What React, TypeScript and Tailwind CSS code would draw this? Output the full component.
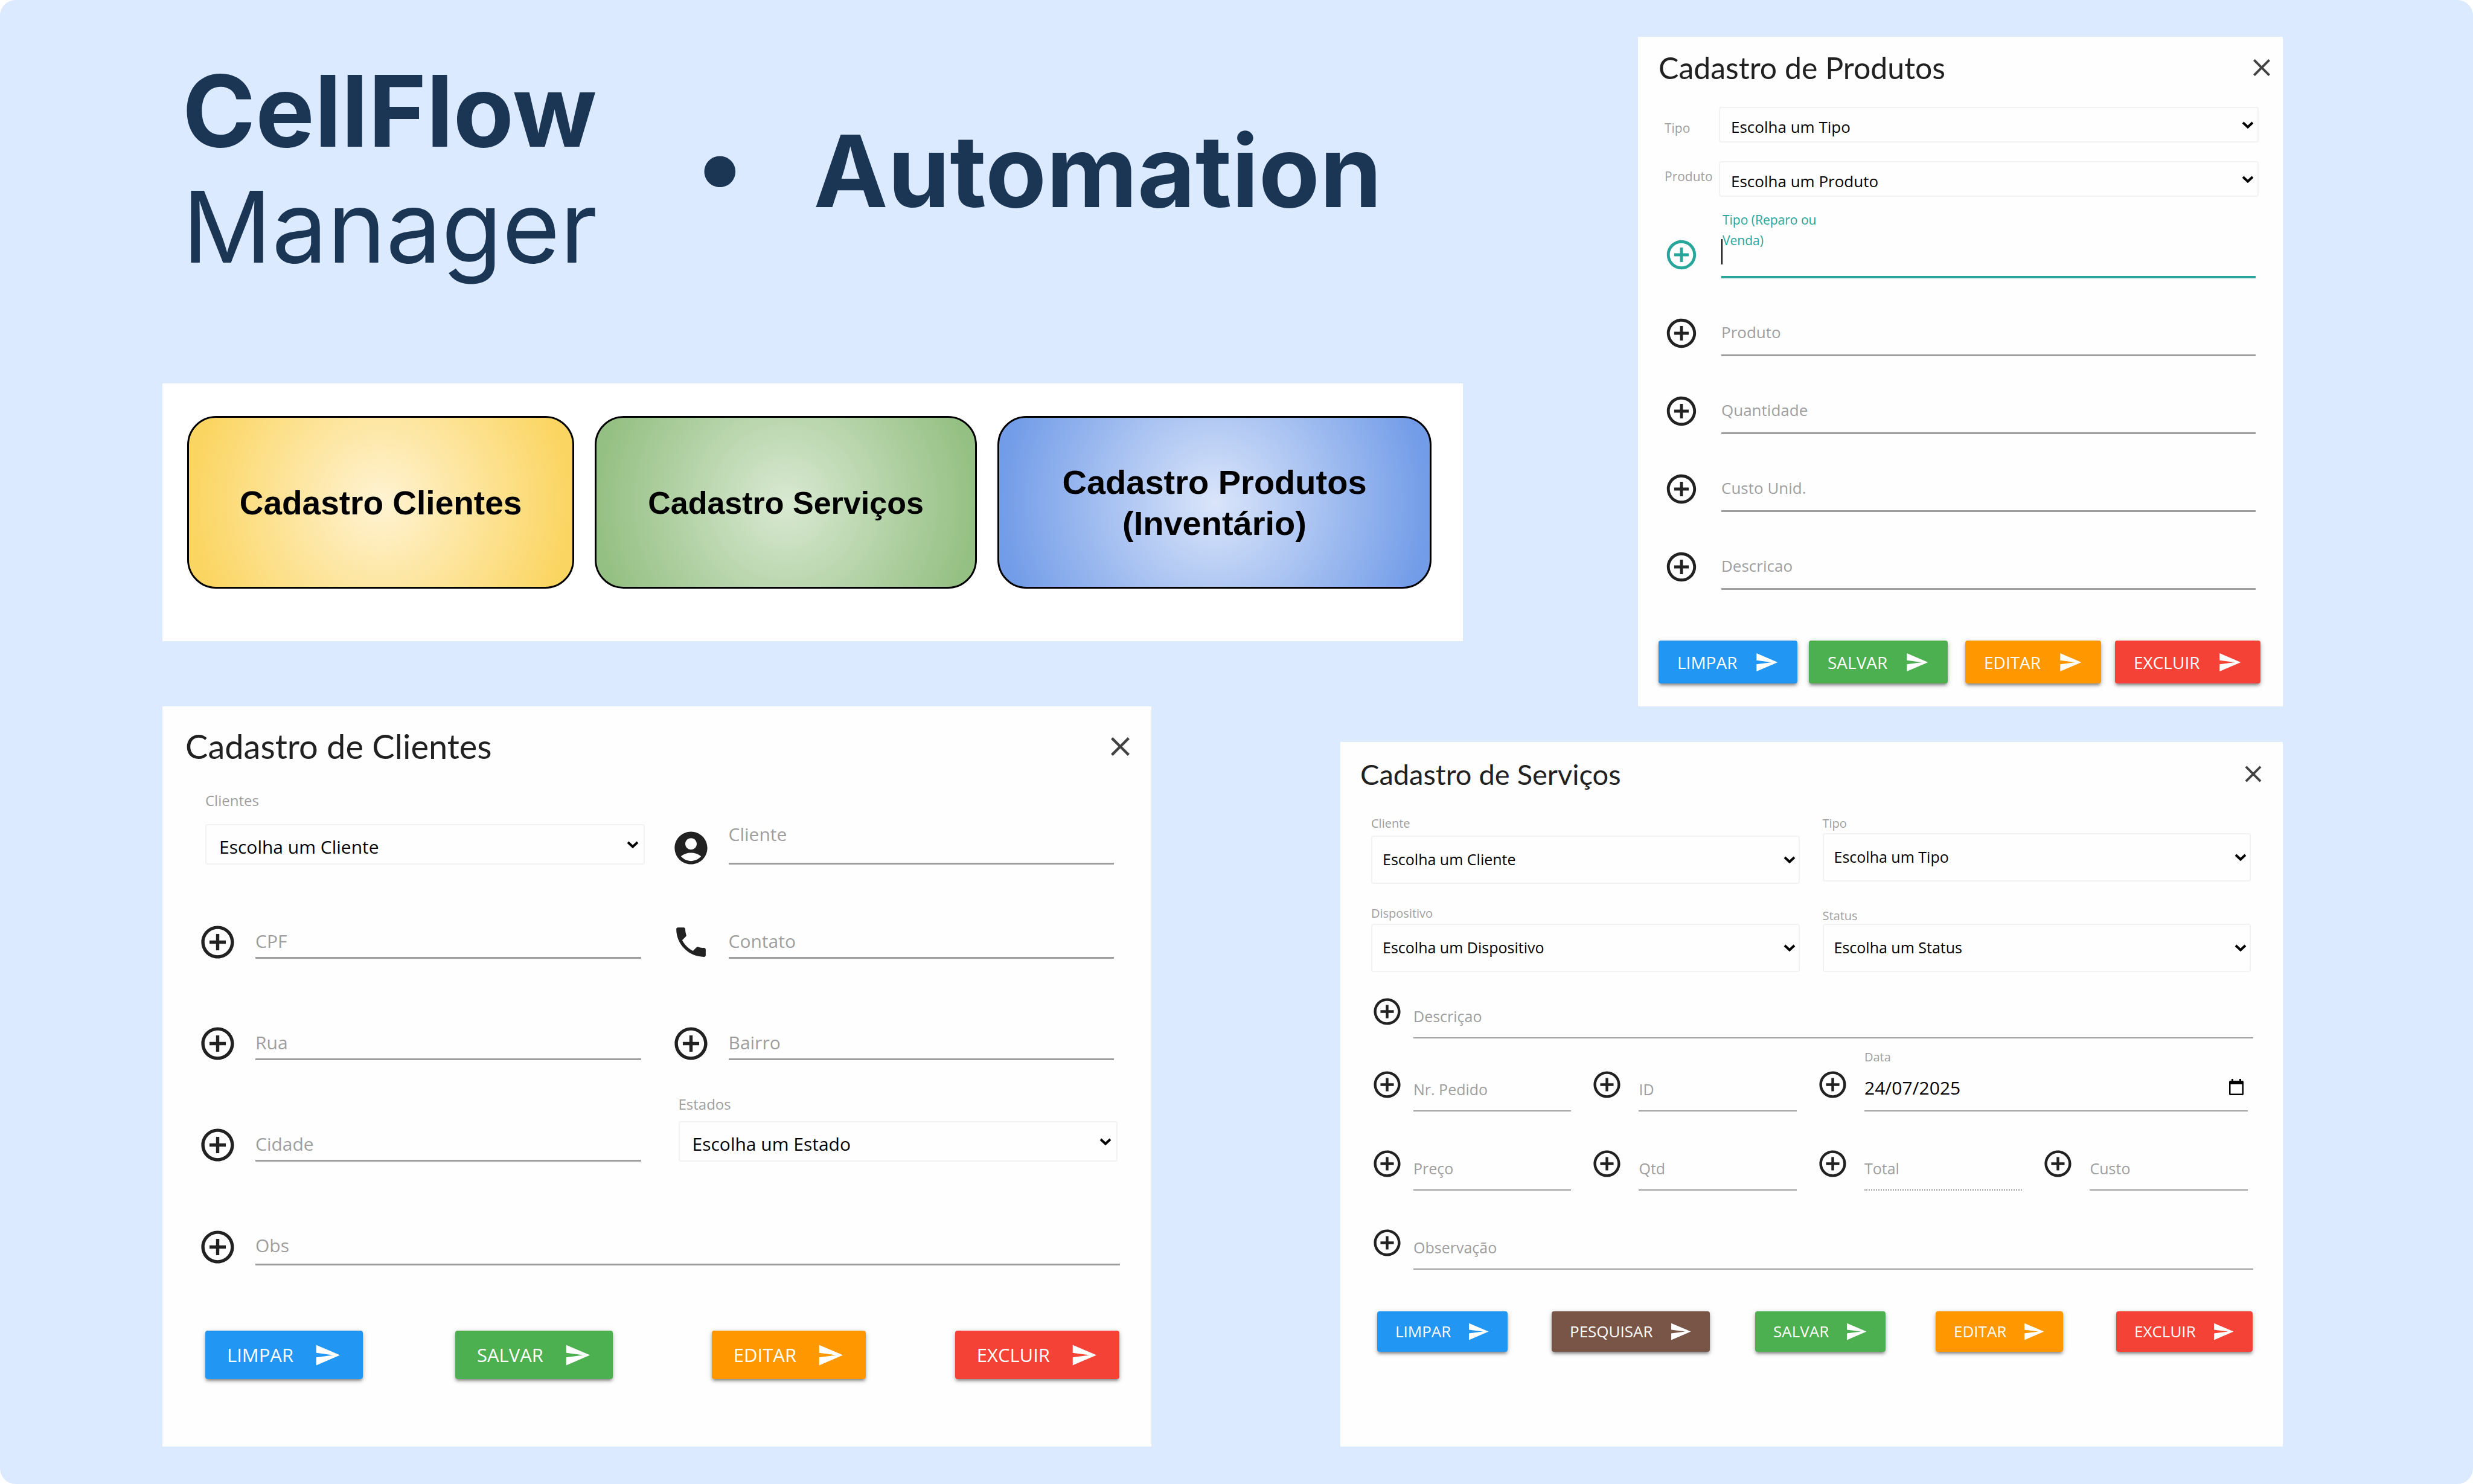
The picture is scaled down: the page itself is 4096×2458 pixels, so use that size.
import { useId } from "react";
import type { ReactNode } from "react";
import type { IconType } from "react-icons";
import { MdAccountCircle, MdAddCircleOutline, MdClose, MdPhone, MdSend } from "react-icons/md";
import clsx from "clsx";

type Size = "sm" | "md" | "lg";

const labelText: Record<Size, string> = {
  sm: "text-[20px] leading-[24px]",
  md: "text-[21px] leading-[34px]",
  lg: "text-[24px] leading-[34px]",
};

const fieldText: Record<Size, string> = {
  sm: "border-b-2 text-[25px] leading-[40px]",
  md: "border-b-3 text-[26px] leading-[40px]",
  lg: "border-b-3 text-[30px] leading-[48px]",
};

const iconSize: Record<Size, string> = {
  sm: "size-[53px]",
  md: "size-[58px]",
  lg: "size-[65px]",
};

const selectBox: Record<Size, string> = {
  sm: "h-[80px] pl-[17px] text-[25px]",
  md: "h-[59px] pl-[18px] pt-[7px] text-[26px]",
  lg: "h-[67px] pl-[21px] pt-[7px] text-[30px]",
};

const chevronBox: Record<Size, string> = {
  sm: "right-[7px]",
  md: "right-[8px]",
  lg: "right-[10px]",
};

const buttonBox: Record<Size, string> = {
  sm: "h-[67px] px-[30px] gap-[27px] text-[26px]",
  md: "h-[71px] px-[31px] gap-[29px] text-[28px]",
  lg: "h-[80px] px-[36px] gap-[34px] text-[31px]",
};

const sendSize: Record<Size, string> = {
  sm: "size-[37px]",
  md: "size-[40px]",
  lg: "size-[45px]",
};

function Header({ title, titleClass, closeClass }: { title: string; titleClass: string; closeClass: string }) {
  return (
    <header className="flex h-[70px] items-center justify-between">
      <h2 className={clsx("font-['Lato',sans-serif] text-[#212121]", titleClass)}>{title}</h2>
      <button type="button" aria-label="Fechar" className="text-[#424242]">
        <MdClose className={closeClass} />
      </button>
    </header>
  );
}

function Select({ id, size, option, className }: { id: string; size: Size; option: string; className?: string }) {
  return (
    <div className={clsx("relative", className)}>
      <select
        id={id}
        className={clsx(
          "block w-full appearance-none rounded-[4px] border-2 border-[#f2f2f2] bg-transparent text-black",
          selectBox[size],
        )}
      >
        <option>{option}</option>
      </select>
      <svg
        viewBox="0 0 20 12"
        aria-hidden="true"
        className={clsx("pointer-events-none absolute top-1/2 h-[12px] w-[20px] -translate-y-1/2", chevronBox[size])}
      >
        <path d="M2 2 L10 9.5 L18 2" fill="none" stroke="#000" strokeWidth="4" />
      </svg>
    </div>
  );
}

function LabeledSelect({ size, label, option, gap, className }: { size: Size; label: string; option: string; gap: string; className?: string }) {
  const id = useId();
  return (
    <div className={className}>
      <label htmlFor={id} className={clsx("block text-[#9e9e9e]", labelText[size])}>
        {label}
      </label>
      <Select id={id} size={size} option={option} className={gap} />
    </div>
  );
}

function Field({
  size,
  label,
  icon: Icon = MdAddCircleOutline,
  gap,
  iconMargin,
  pad,
  dotted,
  className,
}: {
  size: Size;
  label: string;
  icon?: IconType;
  gap: string;
  iconMargin: string;
  pad: string;
  dotted?: boolean;
  className?: string;
}) {
  const id = useId();
  return (
    <div className={clsx("flex items-end", gap, className)}>
      <Icon className={clsx("shrink-0 text-[#212121]", iconSize[size], iconMargin)} />
      <div className={clsx("grid min-w-0 flex-1 border-[#9e9e9e]", dotted && "border-dotted", fieldText[size], pad)}>
        <label htmlFor={id} className="text-[#9e9e9e] [grid-area:1/1]">
          {label}
        </label>
        <input id={id} type="text" className="w-full min-w-0 bg-transparent outline-none [grid-area:1/1]" />
      </div>
    </div>
  );
}

function ActionButton({ size, color, children }: { size: Size; color: string; children: ReactNode }) {
  return (
    <button
      type="button"
      className={clsx(
        "flex items-center justify-self-start rounded-[4px] text-white shadow-[0_4px_4px_rgba(0,0,0,0.2),0_6px_3px_-4px_rgba(0,0,0,0.2),0_2px_10px_rgba(0,0,0,0.2)]",
        buttonBox[size],
        color,
      )}
    >
      {children}
      <MdSend className={sendSize[size]} />
    </button>
  );
}

function Hero() {
  return (
    <div className="mt-[27px] mb-[163px] flex items-center pl-[33px] font-['Inter',sans-serif] text-[165px] leading-[192px] text-[#1b3554]">
      <h1 className="text-[164px]">
        <span className="block font-bold">CellFlow</span>
        <span className="block font-normal">Manager</span>
      </h1>
      <span className="ml-[164px] pb-[16px] font-bold">•</span>
      <span className="ml-[116px] pt-[6px] font-bold">Automation</span>
    </div>
  );
}

const tile =
  "flex h-[286px] items-center justify-center rounded-[48px] border-[3px] border-black pt-[2px] text-center font-['Liberation_Sans',sans-serif] font-bold leading-[68px] text-black";

function Menu() {
  return (
    <nav className="grid grid-cols-[641fr_633fr_719fr] gap-[34px] bg-white pt-[54px] pr-[52px] pb-[87px] pl-[41px]">
      <button
        type="button"
        className={clsx(tile, "bg-[radial-gradient(circle_farthest-side,#fff3d3,#fbd561)] text-[55px]")}
      >
        Cadastro Clientes
      </button>
      <button
        type="button"
        className={clsx(tile, "bg-[radial-gradient(circle_farthest-side,#d9e9d2,#95c083)] text-[52px]")}
      >
        Cadastro Serviços
      </button>
      <button
        type="button"
        className={clsx(tile, "bg-[radial-gradient(circle_farthest-side,#dae5fa,#729ce8)] text-[56px]")}
      >
        Cadastro Produtos
        <br />
        (Inventário)
      </button>
    </nav>
  );
}

function Produtos() {
  const tipo = useId();
  const produto = useId();
  const novo = useId();
  const field = { size: "md" as const, gap: "gap-[38px]", iconMargin: "mb-[9px]", pad: "pb-[17px]", className: "mt-[62px]" };
  return (
    <section className="bg-[#fefefe] pt-[16px] pb-[38px]">
      <div className="pr-[11px] pl-[34px]">
        <Header title="Cadastro de Produtos" titleClass="text-[50px]" closeClass="size-[48px]" />
      </div>
      <div className="mt-[30px] flex items-center pr-[40px] pl-[44px]">
        <label htmlFor={tipo} className={clsx("w-[90px] pt-[10px] text-[#9e9e9e]", labelText.md)}>
          Tipo
        </label>
        <Select id={tipo} size="md" option="Escolha um Tipo" className="flex-1" />
      </div>
      <div className="mt-[31px] flex items-center pr-[40px] pl-[44px]">
        <label htmlFor={produto} className={clsx("w-[90px] pb-[10px] text-[#9e9e9e]", labelText.md)}>
          Produto
        </label>
        <Select id={produto} size="md" option="Escolha um Produto" className="flex-1" />
      </div>
      <div className="pr-[45px] pl-[43px]">
        <div className="mt-[21px] flex items-end gap-[37px] text-[#26a69a]">
          <MdAddCircleOutline className="mb-[10px] size-[58px] shrink-0" />
          <div className="grid h-[114px] flex-1 border-b-4 border-[#26a69a]">
            <label htmlFor={novo} className={clsx("w-[180px] pl-[2px] [grid-area:1/1]", labelText.md)}>
              Tipo (Reparo ou Venda)
            </label>
            <div className="flex items-center self-end pb-[19px] [grid-area:1/1]">
              <span aria-hidden="true" className="h-[42px] w-[2px] bg-black" />
              <input id={novo} type="text" className="h-[42px] min-w-0 flex-1 bg-transparent text-[26px] outline-none" />
            </div>
          </div>
        </div>
        <Field label="Produto" {...field} gap="gap-[37px]" />
        <Field label="Quantidade" {...field} gap="gap-[37px]" />
        <Field label="Custo Unid." {...field} gap="gap-[37px]" />
        <Field label="Descricao" {...field} gap="gap-[37px]" />
      </div>
      <div className="mt-[84px] grid grid-cols-[249fr_259fr_248fr_241fr] pr-[37px] pl-[34px]">
        <ActionButton size="md" color="bg-[#2196f3]">LIMPAR</ActionButton>
        <ActionButton size="md" color="bg-[#4caf50]">SALVAR</ActionButton>
        <ActionButton size="md" color="bg-[#ff9800]">EDITAR</ActionButton>
        <ActionButton size="md" color="bg-[#f44336]">EXCLUIR</ActionButton>
      </div>
    </section>
  );
}

function Clientes() {
  const field = { size: "lg" as const, gap: "gap-[30px]", iconMargin: "-mb-[5px]", pad: "pb-[2px]" };
  return (
    <section className="bg-[#fefefe] pt-[31px] pb-[112px]">
      <div className="pr-[25px] pl-[38px]">
        <Header title="Cadastro de Clientes" titleClass="text-[56px]" closeClass="size-[53px]" />
      </div>
      <div className="pr-[62px] pl-[59px]">
        <div className="mt-[38px] grid grid-cols-2 items-end gap-x-[50px]">
          <LabeledSelect size="lg" label="Clientes" option="Escolha um Cliente" gap="mt-[22px]" className="-mr-[6px] ml-[12px]" />
          <Field label="Cliente" {...field} pad="pb-[23px]" icon={MdAccountCircle} />
        </div>
        <div className="mt-[96px] grid grid-cols-2 items-end gap-x-[50px]">
          <Field label="CPF" {...field} />
          <Field label="Contato" {...field} icon={MdPhone} />
        </div>
        <div className="mt-[108px] grid grid-cols-2 items-end gap-x-[50px]">
          <Field label="Rua" {...field} />
          <Field label="Bairro" {...field} />
        </div>
        <div className="mt-[56px] grid grid-cols-2 items-end gap-x-[50px]">
          <Field label="Cidade" {...field} />
          <LabeledSelect size="lg" label="Estados" option="Escolha um Estado" gap="mt-[11px]" className="-mr-[6px] ml-[12px]" />
        </div>
        <Field label="Obs" {...field} iconMargin="-mb-[2px]" pad="pb-[6px]" className="-mr-[10px] mt-[109px]" />
      </div>
      <div className="mt-[108px] grid grid-cols-[414fr_425fr_403fr_272fr] pr-[53px] pl-[71px]">
        <ActionButton size="lg" color="bg-[#2196f3]">LIMPAR</ActionButton>
        <ActionButton size="lg" color="bg-[#4caf50]">SALVAR</ActionButton>
        <ActionButton size="lg" color="bg-[#ff9800]">EDITAR</ActionButton>
        <ActionButton size="lg" color="bg-[#f44336]">EXCLUIR</ActionButton>
      </div>
    </section>
  );
}

function DateField() {
  const id = useId();
  return (
    <div className="col-span-2 flex items-end gap-[26px]">
      <MdAddCircleOutline className="mb-[18px] size-[53px] shrink-0 text-[#212121]" />
      <div className="min-w-0 flex-1 border-b-2 border-[#9e9e9e] pb-[18px]">
        <label htmlFor={id} className={clsx("block text-[#9e9e9e]", labelText.sm)}>
          Data
        </label>
        <div className="mt-[18px] flex items-center pr-[6px]">
          <input
            id={id}
            type="text"
            defaultValue="24/07/2025"
            className="h-[40px] min-w-0 flex-1 bg-transparent text-[30px] text-black outline-none"
          />
          <button type="button" aria-label="Abrir calendário">
            <svg viewBox="0 0 26 28" className="h-[28px] w-[26px]" aria-hidden="true">
              <path d="M5 0h3v3h10V0h3v3h2a2 2 0 0 1 2 2v20a2 2 0 0 1-2 2H3a2 2 0 0 1-2-2V5a2 2 0 0 1 2-2h2z M3.500 9v15.500h19V9z" fillRule="evenodd" />
            </svg>
          </button>
        </div>
      </div>
    </div>
  );
}

function Servicos() {
  const field = { size: "sm" as const, gap: "gap-[26px]", iconMargin: "mb-[18px]", pad: "pb-[15px]" };
  const first = { ...field, gap: "gap-[17px]" };
  return (
    <section className="bg-[#fefefe] pt-[18px] pb-[157px]">
      <div className="pr-[26px] pl-[33px]">
        <Header title="Cadastro de Serviços" titleClass="text-[47px]" closeClass="size-[46px]" />
      </div>
      <div className="pr-[49px] pl-[51px]">
        <div className="mt-[35px] mr-[4px] grid grid-cols-2 items-start gap-x-[38px]">
          <LabeledSelect size="sm" label="Cliente" option="Escolha um Cliente" gap="mt-[8px]" />
          <LabeledSelect size="sm" label="Tipo" option="Escolha um Tipo" gap="mt-[4px]" />
        </div>
        <div className="mt-[37px] mr-[4px] grid grid-cols-2 items-end gap-x-[38px]">
          <LabeledSelect size="sm" label="Dispositivo" option="Escolha um Dispositivo" gap="mt-[5px]" />
          <LabeledSelect size="sm" label="Status" option="Escolha um Status" gap="mt-[1px]" />
        </div>
        <Field label="Descriçao" {...first} className="mt-[39px]" />
        <div className="mt-[19px] mr-[9px] grid grid-cols-[331fr_340fr_340fr_340fr] items-end gap-x-[33px]">
          <Field label="Nr. Pedido" {...first} />
          <Field label="ID" {...field} />
          <DateField />
        </div>
        <div className="mt-[60px] mr-[9px] grid grid-cols-[331fr_340fr_340fr_340fr] items-end gap-x-[33px]">
          <Field label="Preço" {...first} />
          <Field label="Qtd" {...field} />
          <Field label="Total" {...field} dotted />
          <Field label="Custo" {...field} />
        </div>
        <Field label="Observação" {...first} className="mt-[60px]" />
      </div>
      <div className="mt-[69px] grid grid-cols-[289fr_337fr_299fr_299fr_226fr] pr-[50px] pl-[61px]">
        <ActionButton size="sm" color="bg-[#2196f3]">LIMPAR</ActionButton>
        <ActionButton size="sm" color="bg-[#795548]">PESQUISAR</ActionButton>
        <ActionButton size="sm" color="bg-[#4caf50]">SALVAR</ActionButton>
        <ActionButton size="sm" color="bg-[#ff9800]">EDITAR</ActionButton>
        <ActionButton size="sm" color="bg-[#f44336]">EXCLUIR</ActionButton>
      </div>
    </section>
  );
}

export default function App() {
  return (
    <div className="bg-white">
      <main className="min-h-screen rounded-[26px] bg-[#dbeafe] pt-[61px] pr-[315px] pb-[62px] pl-[269px] font-['Open_Sans',sans-serif]">
        <div className="grid grid-cols-[2154fr_1068fr] gap-x-[290px]">
          <div>
            <Hero />
            <Menu />
          </div>
          <Produtos />
        </div>
        <div className="grid grid-cols-[1638fr_1561fr] items-end gap-x-[313px]">
          <Clientes />
          <Servicos />
        </div>
      </main>
    </div>
  );
}
